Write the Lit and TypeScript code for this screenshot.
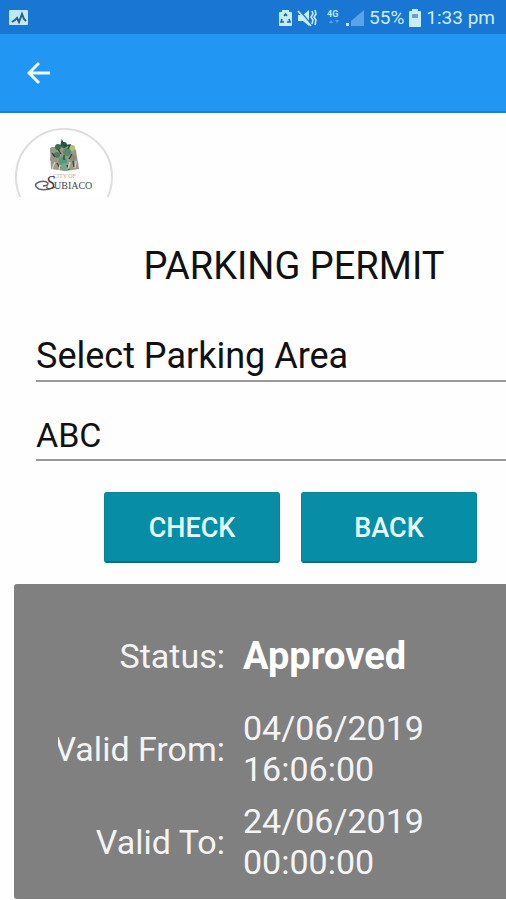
import { LitElement, html, css, svg } from "lit";
import { customElement, state } from "lit/decorators.js";

@customElement("status-bar")
class StatusBar extends LitElement {
  static styles = css`
    :host {
      display: flex;
      align-items: center;
      justify-content: space-between;
      box-sizing: border-box;
      height: 34px;
      padding: 2px 11px 0 9px;
      background: #1976d2;
      color: #cdeefc;
      font-size: 19px;
      line-height: 24px;
    }
    .right {
      display: flex;
      align-items: center;
      gap: 5px;
    }
    svg {
      display: block;
    }
    .net {
      font-size: 9px;
      font-weight: 700;
    }
  `;

  render() {
    return html`
      <svg width="20" height="16" viewBox="0 0 20 16">
        <rect width="19" height="15" rx="1" fill="#bfe9fb" />
        <path d="M3 12l3-2 2-2 2 4 3-8 2 5 2 2" fill="none" stroke="#2b5f7c" stroke-width="2" />
      </svg>
      <div class="right">
        <svg width="62" height="20" viewBox="0 0 62 20">
          <path d="M1 4h2V2h7v2h2q1 0 1 1v12q0 1-1 1H1q-1 0-1-1V5q0-1 1-1z" fill="#c4edfb" />
          <path d="M5 8l1.500-2 1.500 2M3 11l-1 3h3M10 11l1 3H8" fill="none" stroke="#1f5fa0" stroke-width="1.6" />
          <path d="M19 7h5l6-5v16l-6-5h-5z" fill="#c4edfb" />
          <path d="M20 2l13 15" stroke="#1976d2" stroke-width="1.5" />
          <path d="M19 3l13 15" stroke="#c4edfb" stroke-width="1.8" />
          <path d="M33 3l1 3-2 3 2 3-1 4M36 2l1 4-2 3 2 3-1 5" fill="none" stroke="#c4edfb" stroke-width="1.6" />
          <text class="net" x="48" y="9" fill="#bfe9fb">4G</text>
          <path d="M50 15h4l-2-3zM56 12h4l-2 3z" fill="#5ba6ea" />
        </svg>
        <svg width="18" height="18" viewBox="0 0 18 18">
          <path d="M18 1v16H5v-5z" fill="#5aa3e8" />
          <rect x="0" y="14" width="3" height="3" fill="#bfe9fb" />
        </svg>
        <span>55%</span>
        <svg width="12" height="18" viewBox="0 0 12 18">
          <path d="M1 2h2V0h6v2h2q1 0 1 1v14q0 1-1 1H1q-1 0-1-1V3q0-1 1-1z" fill="#c8edfb" />
          <rect x="3" y="5" width="6" height="4" fill="#6f9fc4" />
        </svg>
        <span>1:33 pm</span>
      </div>
    `;
  }
}

@customElement("council-logo")
class CouncilLogo extends LitElement {
  static styles = css`
    :host {
      display: block;
    }
    svg {
      display: block;
    }
    .name {
      font-family: "Liberation Serif", serif;
    }
    .initial {
      font-style: italic;
    }
  `;

  render() {
    const leaves: [number, number, number, string][] = [
      [38, 22, 3, "#8f9f80"],
      [43, 19, 3, "#416b50"],
      [49, 17, 3, "#2f5a45"],
      [57, 20, 3, "#b3bf72"],
      [52, 24, 4, "#568b6a"],
      [42, 27, 3, "#557a60"],
      [48, 33, 4, "#4f9a78"],
      [38, 31, 3, "#9a9788"],
      [58, 30, 3, "#8c8a72"],
      [39, 38, 3, "#a39c8c"],
      [58, 38, 3, "#a49a84"],
      [50, 39, 4, "#7aa58c"],
    ];
    return html`
      <svg width="98" height="69" viewBox="0 0 98 69" role="img" aria-label="City of Subiaco">
        <circle cx="49" cy="49" r="48" fill="#fff" stroke="#dedede" stroke-width="2" />
        <path d="M35 20l7-2 6-2 8 1 5 5 3 19-14 2-14-2z" fill="#97988a" />
        ${leaves.map(([x, y, r, fill]) => svg`<circle cx=${x} cy=${y} r=${r} fill=${fill} />`)}
        <path
          d="M46 18l1-5 3 5 5-1-2 4M37 25l3 4M43 21l3 5M57 26l-3 5M42 35l3 5M58 33l1 6M49 27v5M52 37l2 5"
          fill="none"
          stroke="#2c4a3b"
          stroke-width="1.400"
        />
        <path d="M40 34l-3 7M55 34l-2 7M45 37l-1 5M61 33l-1 7" stroke="#dbd7cb" stroke-width="1.200" />
        <text class="name" x="38" y="50" font-size="6" fill="#c7a983">CITY OF</text>
        <path d="M40 59q-9 4-16 2q-7-4 0-7q6-2 9 1q0 3-5 3" fill="none" stroke="#63666e" stroke-width="1.500" />
        <text class="name initial" x="31" y="61" font-size="18" fill="#44464c">S</text>
        <text class="name" x="39" y="61" font-size="10" fill="#44464c">UBIACO</text>
      </svg>
    `;
  }
}

@customElement("app-root")
class AppRoot extends LitElement {
  static styles = css`
    :host {
      display: block;
      min-height: 100vh;
      overflow: hidden;
      background: #fefefe;
      color: #111;
      font-family: Roboto, sans-serif;
    }
    .appbar {
      display: flex;
      align-items: center;
      box-sizing: border-box;
      height: 79px;
      padding: 0 27px;
      background: #2196f3;
      border-bottom: 2px solid #1b80d0;
    }
    .icon-button {
      padding: 0;
      border: 0;
      background: none;
    }
    .icon-button svg {
      display: block;
    }
    .logo {
      padding: 15px 15px 0;
    }
    h1 {
      margin: 45px 0 0 82px;
      font-size: 38px;
      line-height: 48px;
      font-weight: 400;
      text-align: center;
    }
    .fields {
      display: grid;
      gap: 28px;
      margin: 41px 0 0 36px;
    }
    .field {
      appearance: none;
      box-sizing: border-box;
      width: 100%;
      height: 51px;
      margin: 0;
      padding: 0;
      border: 0;
      border-bottom: 2px solid #999;
      border-radius: 0;
      background: none;
      color: inherit;
      font: 36px/48px Roboto, sans-serif;
    }
    input.field {
      font-size: 34px;
    }
    .actions {
      display: flex;
      gap: 21px;
      justify-content: center;
      margin: 31px 0 21px 75px;
    }
    .actions button {
      flex: 0 1 176px;
      height: 71px;
      padding: 2px 0 0;
      border: 1px solid #0b8497;
      border-bottom: 2px solid #08707f;
      border-radius: 3px;
      background: #078da5;
      color: #e6fbff;
      font: 500 27px/32px Roboto, sans-serif;
    }
    .card {
      display: grid;
      grid-template-columns: 167px 1fr;
      gap: 11px 18px;
      align-items: center;
      margin: 0 0 2px 14px;
      padding: 48px 16px 16px 44px;
      border-radius: 3px 0 0 3px;
      background: #808080;
      color: #f4f4f4;
      font-size: 34px;
      line-height: 41px;
    }
    dt {
      display: flex;
      justify-content: flex-end;
      overflow: hidden;
      white-space: nowrap;
    }
    dd {
      margin: 0;
    }
    .stamp span {
      display: block;
    }
    .status {
      padding: 4px 0 20px;
    }
    .strong {
      color: #fff;
      font-size: 38px;
      font-weight: 700;
    }
  `;

  @state() private plate = "ABC";

  render() {
    return html`
      <status-bar></status-bar>
      <header class="appbar">
        <button class="icon-button" aria-label="Go back">
          <svg width="24" height="24" viewBox="0 0 24 24" fill="none" stroke="#f2fcff" stroke-width="3">
            <path d="M12 2L2 12l10 10M2 12h21" />
          </svg>
        </button>
      </header>
      <main>
        <council-logo class="logo"></council-logo>
        <h1>PARKING PERMIT</h1>
        <div class="fields">
          <select class="field" aria-label="Parking area">
            <option>Select Parking Area</option>
          </select>
          <input class="field" aria-label="Registration" .value=${this.plate} />
        </div>
        <div class="actions">
          <button>CHECK</button>
          <button>BACK</button>
        </div>
        <dl class="card">
          <dt class="status">Status:</dt>
          <dd class="status strong">Approved</dd>
          <dt>Valid From:</dt>
          <dd class="stamp"><span>04/06/2019</span><span>16:06:00</span></dd>
          <dt>Valid To:</dt>
          <dd class="stamp"><span>24/06/2019</span><span>00:00:00</span></dd>
        </dl>
      </main>
    `;
  }
}
